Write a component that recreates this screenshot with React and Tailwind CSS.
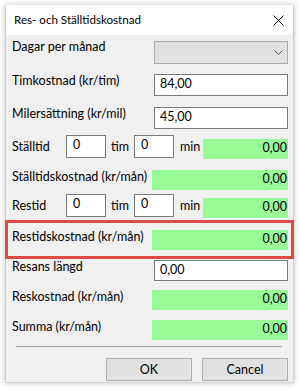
import React from 'react'

const font = { fontFamily: 'Lato, "Segoe UI", sans-serif' }

function Green({ className = '', value = '0,00' }) {
  return (
    <div className={`h-[20px] bg-[#98fb98] text-right pr-[1px] leading-[17px] ${className}`}>
      {value}
    </div>
  )
}

function TextBox({ className = '', value }) {
  return (
    <div className={`bg-white border border-[#7a7a7a] pl-[5px] leading-[18px] ${className}`}>
      {value}
    </div>
  )
}

function TimeRow({ label }) {
  return (
    <div className="flex items-start h-[26px]">
      <div className="w-[54px] mt-[4px] leading-[16px]">{label}</div>
      <TextBox className="w-[40px] h-[23px] leading-[17px] pl-[6px]" value="0" />
      <div className="w-[28px] pl-[5px] mt-[4px] leading-[16px]">tim</div>
      <TextBox className="w-[40px] h-[23px] leading-[17px] pl-[6px]" value="0" />
      <div className="w-[29px] pl-[6px] mt-[4px] leading-[16px]">min</div>
      <Green className="flex-1 mt-[4px]" />
    </div>
  )
}

export default function App() {
  return (
    <div className="w-[299px] h-[391px] bg-white p-[5px] text-[12.5px] text-[#000] whitespace-nowrap" style={font}>
      <div className="h-[378px] flex flex-col bg-[#f0f0f0] border border-[#d0d0d0] shadow-[0_0_6px_rgba(0,0,0,0.25)]">
        {/* Title bar */}
        <div className="h-[30px] bg-white flex items-center justify-between pl-[8px] pr-[9px] -mt-px">
          <span className="text-[11.6px]">Res- och Ställtidskostnad</span>
          <svg width="11" height="11" viewBox="0 0 11 11">
            <path d="M0.5 0.5 L10.5 10.5 M10.5 0.5 L0.5 10.5" stroke="#000" strokeWidth="1" />
          </svg>
        </div>

        <div className="flex flex-col pl-[6px] pr-[5px] leading-[16px]">
          {/* Dagar per månad */}
          <div className="flex items-start h-[25px] mt-[4px]">
            <div className="flex-1">Dagar per månad</div>
            <div className="w-[134px] h-[23px] mt-[2px] bg-[#e1e1e1] border border-[#adadad] flex items-center justify-end pr-[4px]">
              <svg width="9" height="6" viewBox="0 0 9 6">
                <path d="M0.5 0.5 L4.5 4.5 L8.5 0.5" stroke="#555" fill="none" strokeWidth="1" />
              </svg>
            </div>
          </div>

          <div className="flex items-start h-[23px] mt-[9px]">
            <div className="flex-1">Timkostnad (kr/tim)</div>
            <TextBox className="w-[134px] h-[22px] mt-[1px]" value="84,00" />
          </div>

          <div className="flex items-start h-[23px] mt-[10px]">
            <div className="flex-1">Milersättning (kr/mil)</div>
            <TextBox className="w-[134px] h-[22px] mt-[1px]" value="45,00" />
          </div>

          <div className="mt-[6px]">
            <TimeRow label="Ställtid" />
          </div>

          <div className="flex items-start h-[21px] mt-[8px]">
            <div className="flex-1">Ställtidskostnad (kr/mån)</div>
            <Green className="w-[136px] mt-[1px]" />
          </div>

          <div className="mt-[4px]">
            <TimeRow label="Restid" />
          </div>

          {/* Highlighted row */}
          <div className="-ml-[7px] -mr-[6px] border-[3px] border-[#dc4c46] h-[39px] flex items-start pl-[4px] pr-[3px] pt-[6px]">
            <div className="flex-1">Restidskostnad (kr/mån)</div>
            <Green className="w-[136px] mt-[1px]" />
          </div>

          <div className="flex items-start h-[23px]">
            <div className="flex-1">Resans längd</div>
            <TextBox className="w-[134px] h-[21px] mt-[1px]" value="0,00" />
          </div>

          <div className="flex items-start h-[21px] mt-[7px]">
            <div className="flex-1">Reskostnad (kr/mån)</div>
            <Green className="w-[136px] mt-[1px]" />
          </div>

          <div className="flex items-start h-[21px] mt-[9px]">
            <div className="flex-1">Summa (kr/mån)</div>
            <Green className="w-[136px] mt-[1px]" />
          </div>

          <div className="ml-[4px] mr-[6px] mt-[6px] border-t border-[#a0a0a0]" />

          <div className="flex justify-end gap-[10px] mt-[11px]">
            <button className="w-[86px] h-[23px] bg-[#e1e1e1] border border-[#adadad]">OK</button>
            <button className="w-[86px] h-[23px] bg-[#e1e1e1] border border-[#adadad]">Cancel</button>
          </div>
        </div>
      </div>
    </div>
  )
}
